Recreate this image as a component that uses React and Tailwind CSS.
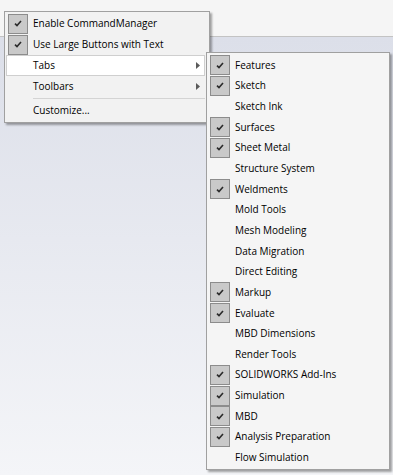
import React from "react";

const Check = () => (
  <svg width="8" height="7" viewBox="0 0 8 7" className="block">
    <path d="M1 3.6 L3 5.6 L7 1" fill="none" stroke="#2b2b2b" strokeWidth="1.6" />
  </svg>
);

const Box = ({ on }) =>
  on ? (
    <div className="w-[20px] h-[20px] bg-[#c9c9c9] border border-[#8c8c8c] flex items-center justify-center shrink-0">
      <Check />
    </div>
  ) : (
    <div className="w-[20px] h-[20px] shrink-0" />
  );

const Arrow = () => (
  <svg width="4" height="7" viewBox="0 0 4 7" className="block">
    <path d="M0 0 L4 3.5 L0 7 Z" fill="#5a5a5a" />
  </svg>
);

const tabs = [
  ["Features", true],
  ["Sketch", true],
  ["Sketch Ink", false],
  ["Surfaces", true],
  ["Sheet Metal", true],
  ["Structure System", false],
  ["Weldments", true],
  ["Mold Tools", false],
  ["Mesh Modeling", false],
  ["Data Migration", false],
  ["Direct Editing", false],
  ["Markup", true],
  ["Evaluate", true],
  ["MBD Dimensions", false],
  ["Render Tools", false],
  ["SOLIDWORKS Add-Ins", true],
  ["Simulation", true],
  ["MBD", true],
  ["Analysis Preparation", true],
  ["Flow Simulation", false],
];

export default function App() {
  return (
    <div
      className="relative w-[393px] h-[475px] overflow-hidden text-[10px] text-[#000000]"
      style={{ fontFamily: '"Open Sans", "Noto Sans", sans-serif' }}
    >
      <div className="h-[37px] bg-[#f5f5f5] border-b border-[#c3c3c3]" />
      <div className="h-[438px] bg-gradient-to-b from-[#dcdfe9] to-[#f4f5f8]" />

      {/* main menu */}
      <div className="absolute left-[4px] top-[11px] w-[206px] bg-[#f2f2f2] border border-[#a0a0a0] shadow-[2px_2px_2px_rgba(0,0,0,0.35)] pt-[1px] pb-[1px] px-[1px]">
        <div className="h-[21px] flex items-center pl-[2px]">
          <Box on />
          <span className="ml-[5px]">Enable CommandManager</span>
        </div>
        <div className="h-[21px] flex items-center pl-[2px]">
          <Box on />
          <span className="ml-[5px]">Use Large Buttons with Text</span>
        </div>
        <div className="h-[21px] flex items-center bg-white border border-[#cfcfcf] mr-[3px] pl-[1px] pr-[4px]">
          <Box />
          <span className="ml-[5px] flex-1">Tabs</span>
          <Arrow />
        </div>
        <div className="h-[21px] flex items-center pl-[2px] pr-[8px]">
          <Box />
          <span className="ml-[5px] flex-1">Toolbars</span>
          <Arrow />
        </div>
        <div className="h-[1px] bg-[#d4d4d4] ml-[27px] mr-[3px] my-[1px]" />
        <div className="h-[21px] flex items-center pl-[2px]">
          <Box />
          <span className="ml-[5px]">Customize...</span>
        </div>
      </div>

      {/* submenu */}
      <div className="absolute left-[206px] top-[52px] w-[184px] bg-[#f5f5f5] border border-[#a0a0a0] shadow-[2px_2px_2px_rgba(0,0,0,0.35)] pt-[2px] pb-[1px] pl-[3px]">
        {tabs.map(([label, on]) => (
          <div key={label} className="h-[20.65px] flex items-center">
            <Box on={on} />
            <span className="ml-[5px]">{label}</span>
          </div>
        ))}
      </div>
    </div>
  );
}
